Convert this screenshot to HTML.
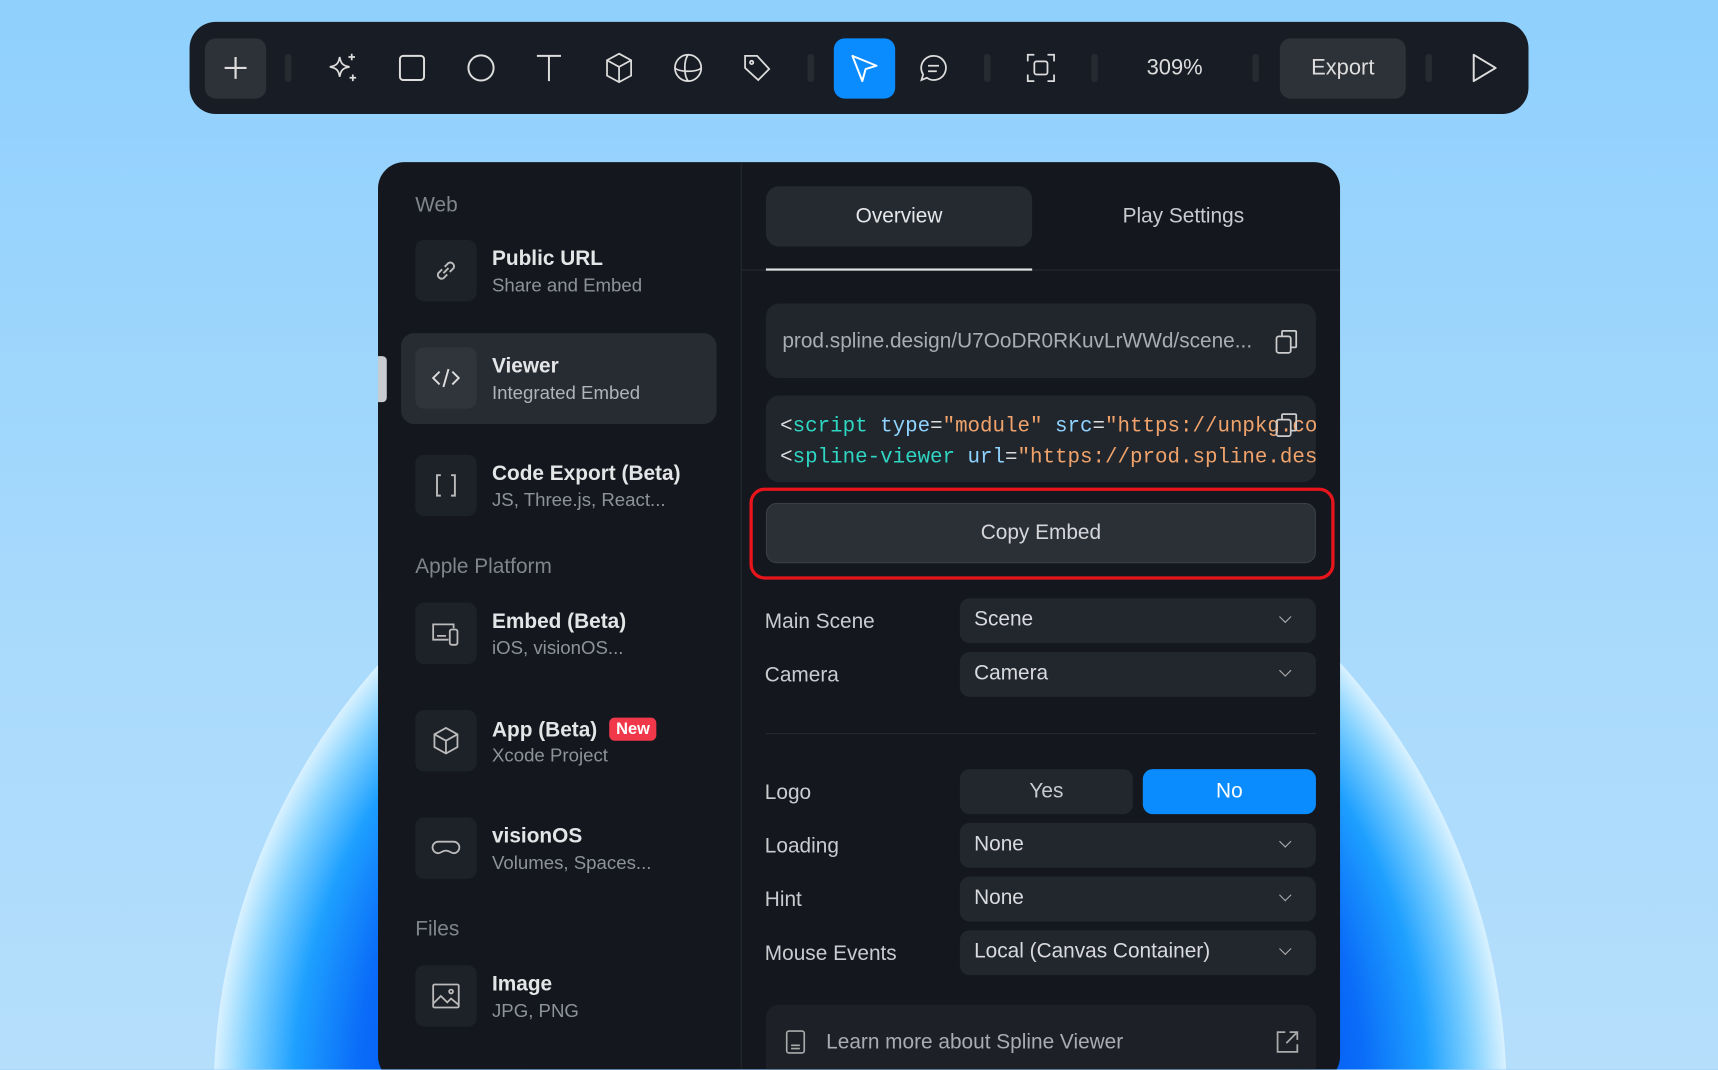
<!DOCTYPE html>
<html><head><meta charset="utf-8"><style>
*{box-sizing:border-box;margin:0;padding:0}
html,body{width:1718px;height:1070px;overflow:hidden}
body{background:#9fd4fb;font-family:"Liberation Sans",sans-serif}
#s{position:absolute;left:0;top:0;width:1568px;height:976px;transform:scale(1.0957);transform-origin:0 0;overflow:hidden;background:linear-gradient(#8fd0fd,#a9dafc 60%,#b5defb)}
.abs{position:absolute}
.globe{position:absolute;left:195px;top:410px;width:1180px;height:1180px;border-radius:50%;
background:radial-gradient(circle at 50% 50%,#0040e0 0%,#0050f0 45%,#0a6cf8 55%,#1ea0ff 62%,#7fd0ff 67%,#e0f4ff 71%,#c6e9fe 74%);}
.tb{left:173px;top:20px;width:1222px;height:84px;background:#181c24;border-radius:24px}
.sep{position:absolute;top:49px;width:6px;height:26px;border-radius:3px;background:#262a31}
.ic{position:absolute;top:46px;width:32px;height:32px}
.panel{left:345px;top:148px;width:878px;height:840px;background:#14181e;border-radius:24px;overflow:hidden}
.lbl{position:absolute;color:#80858c;font-size:19px}
.item{position:absolute;left:379px;height:56px}
.ib{position:absolute;left:0;top:0;width:56px;height:56px;background:#1d2128;border-radius:8px}
.ib svg{position:absolute;left:14px;top:14px;width:28px;height:28px}
.t1{position:absolute;left:70px;top:7px;color:#e4e5e7;font-size:19px;font-weight:bold;white-space:nowrap}
.t2{position:absolute;left:70px;top:32px;color:#8e9299;font-size:17px;white-space:nowrap}
.box{position:absolute;background:#21252c;border-radius:12px}
.rl{position:absolute;left:698px;color:#c9cbcf;font-size:19px}
.sel{position:absolute;left:876px;width:325px;height:41px;background:#22262d;border-radius:9px;color:#d9dadd;font-size:19px;padding:9px 13px}
.sel:after{content:"";position:absolute;right:24px;top:13px;width:7px;height:7px;border-right:1.6px solid #aaa;border-bottom:1.6px solid #aaa;transform:rotate(45deg)}
.mono{font-family:"Liberation Mono",monospace;font-size:19px;white-space:nowrap}
</style></head><body><div id="s">
<div class="globe"></div>

<div class="abs tb"></div>
<div class="abs" style="left:187px;top:35px;width:56px;height:55px;background:#2d3138;border-radius:10px"></div>
<svg class="abs" style="left:203px;top:50px" width="24" height="24" stroke="#ddd" stroke-width="2" fill="none"><path d="M12 2v20M2 12h20"/></svg>
<div class="sep" style="left:260px"></div><div class="sep" style="left:737px"></div><div class="sep" style="left:898px"></div><div class="sep" style="left:996px"></div><div class="sep" style="left:1143px"></div><div class="sep" style="left:1301px"></div>
<svg class="ic" style="left:297px" viewBox="0 0 32 32" fill="none" stroke="#ddd" stroke-width="1.6"><path d="M13 6c1 6 3 8 9 9-6 1-8 3-9 9-1-6-3-8-9-9 6-1 8-3 9-9z"/><path d="M24 3v6M21 6h6M25 22v6M22 25h6"/></svg>
<svg class="ic" style="left:360px" viewBox="0 0 32 32" fill="none" stroke="#ddd" stroke-width="1.8"><rect x="5" y="5" width="22" height="22" rx="3"/></svg>
<svg class="ic" style="left:423px" viewBox="0 0 32 32" fill="none" stroke="#ddd" stroke-width="1.8"><circle cx="16" cy="16" r="11.5"/></svg>
<svg class="ic" style="left:485px" viewBox="0 0 32 32" fill="none" stroke="#ddd" stroke-width="1.8"><path d="M5 5h22M16 5v23"/></svg>
<svg class="ic" style="left:549px" viewBox="0 0 32 32" fill="none" stroke="#ddd" stroke-width="1.6"><path d="M16 3l11 6v14l-11 6-11-6V9zM5 9l11 6 11-6M16 15v14"/></svg>
<svg class="ic" style="left:612px" viewBox="0 0 32 32" fill="none" stroke="#ddd" stroke-width="1.6"><circle cx="16" cy="16" r="12"/><path d="M4 16c4 4 20 4 24 0M16 4c-4 5-4 19 0 24"/></svg>
<svg class="ic" style="left:675px" viewBox="0 0 32 32" fill="none" stroke="#ddd" stroke-width="1.6"><path d="M5 5h11l11 12-10 10L5 16z"/><circle cx="11" cy="11" r="1.5"/></svg>
<div class="abs" style="left:761px;top:35px;width:56px;height:55px;background:#0a8cff;border-radius:10px"></div>
<svg class="ic" style="left:773px;top:47px" viewBox="0 0 32 32" fill="none" stroke="#fff" stroke-width="1.8" stroke-linejoin="round"><path d="M5 4l22 9-10 3-3 11z"/></svg>
<svg class="ic" style="left:836px" viewBox="0 0 32 32" fill="none" stroke="#ddd" stroke-width="1.6"><path d="M16 5a11 11 0 1 1-6 20l-5 2 1.5-5A11 11 0 0 1 16 5z"/><path d="M11 14h10M11 19h8"/></svg>
<svg class="ic" style="left:934px" viewBox="0 0 32 32" fill="none" stroke="#ddd" stroke-width="1.6"><path d="M4 10V4h6M22 4h6v6M28 22v6h-6M10 28H4v-6"/><rect x="10" y="10" width="12" height="12" rx="2"/></svg>
<div class="abs" style="left:1030px;top:51px;width:84px;text-align:center;color:#ddd;font-size:20px">309%</div>
<div class="abs" style="left:1168px;top:35px;width:115px;height:55px;background:#2d3138;border-radius:10px;color:#ddd;font-size:20px;text-align:center;line-height:55px">Export</div>
<svg class="ic" style="left:1338px" viewBox="0 0 32 32" fill="none" stroke="#ddd" stroke-width="1.8" stroke-linejoin="round"><path d="M7 4l20 12-20 12z"/></svg>

<div class="abs panel"></div>
<div class="abs" style="left:676px;top:148px;width:1px;height:829px;background:#252930"></div>
<div class="abs" style="left:345px;top:325px;width:8px;height:42px;background:#c9ccd0;border-radius:0 4px 4px 0"></div>
<div class="lbl" style="left:379px;top:177px">Web</div>
<div class="item" style="top:219px"><div class="ib"><svg viewBox="0 0 24 24" fill="none" stroke="#bbb" stroke-width="1.5"><path d="M10 14l4-4M9 11l-3 3a3 3 0 0 0 4 4l3-3M15 13l3-3a3 3 0 0 0-4-4l-3 3"/></svg></div><div class="t1">Public URL</div><div class="t2">Share and Embed</div></div>
<div class="abs" style="left:366px;top:304px;width:288px;height:83px;background:#272b32;border-radius:12px"></div>
<div class="item" style="top:317px"><div class="ib" style="background:#30343b"><svg viewBox="0 0 24 24" fill="none" stroke="#ddd" stroke-width="1.5"><path d="M7 7l-5 5 5 5M17 7l5 5-5 5M14 5l-4 14"/></svg></div><div class="t1">Viewer</div><div class="t2" style="color:#b0b3b8">Integrated Embed</div></div>
<div class="item" style="top:415px"><div class="ib"><svg viewBox="0 0 24 24" fill="none" stroke="#bbb" stroke-width="1.5"><path d="M8 4H5v16h3M16 4h3v16h-3"/></svg></div><div class="t1">Code Export (Beta)</div><div class="t2">JS, Three.js, React...</div></div>
<div class="lbl" style="left:379px;top:507px">Apple Platform</div>
<div class="item" style="top:550px"><div class="ib"><svg viewBox="0 0 24 24" fill="none" stroke="#bbb" stroke-width="1.4"><path d="M14 17H2V5h16v3M5 14h7"/><rect x="15" y="9" width="6" height="12" rx="1.5"/></svg></div><div class="t1">Embed (Beta)</div><div class="t2">iOS, visionOS...</div></div>
<div class="item" style="top:648px"><div class="ib"><svg viewBox="0 0 24 24" fill="none" stroke="#bbb" stroke-width="1.4"><path d="M12 2l9 5v10l-9 5-9-5V7zM3 7l9 5 9-5M12 12v10"/></svg></div><div class="t1">App (Beta) <span style="display:inline-block;background:#f0384a;color:#fff;font-size:15px;padding:2px 6px;border-radius:5px;margin-left:6px;vertical-align:2px">New</span></div><div class="t2">Xcode Project</div></div>
<div class="item" style="top:746px"><div class="ib"><svg viewBox="0 0 24 24" fill="none" stroke="#bbb" stroke-width="1.4"><path d="M6 7h12a4.5 4.5 0 0 1 0 9c-2 0-3-2-6-2s-4 2-6 2a4.5 4.5 0 0 1 0-9z"/></svg></div><div class="t1">visionOS</div><div class="t2">Volumes, Spaces...</div></div>
<div class="lbl" style="left:379px;top:838px">Files</div>
<div class="item" style="top:881px"><div class="ib"><svg viewBox="0 0 24 24" fill="none" stroke="#bbb" stroke-width="1.4"><rect x="2" y="3" width="20" height="18" rx="1"/><path d="M2 18l6-6 5 5 3-3 6 5"/><circle cx="16" cy="8.5" r="1.5"/></svg></div><div class="t1">Image</div><div class="t2">JPG, PNG</div></div>

<div class="box" style="left:699px;top:170px;width:243px;height:55px;background:#252930"></div>
<div class="abs" style="left:699px;top:187px;width:243px;text-align:center;color:#e6e7e9;font-size:19px">Overview</div>
<div class="abs" style="left:960px;top:187px;width:240px;text-align:center;color:#c9cbcf;font-size:19px">Play Settings</div>
<div class="abs" style="left:677px;top:246px;width:546px;height:1px;background:#262a31"></div>
<div class="abs" style="left:699px;top:245px;width:243px;height:2px;background:#e0e0e0"></div>
<div class="box" style="left:699px;top:277px;width:502px;height:68px"></div>
<div class="abs" style="left:714px;top:301px;color:#a9acb2;font-size:19px;white-space:nowrap">prod.spline.design/U7OoDR0RKuvLrWWd/scene...</div>
<svg class="abs" style="left:1162px;top:299px" width="24" height="26" fill="none" stroke="#ccc" stroke-width="1.6"><rect x="3" y="8" width="13" height="15" rx="2"/><path d="M8 8V4a1 1 0 0 1 1-1h11a1 1 0 0 1 1 1v13a1 1 0 0 1-1 1h-4"/></svg>
<div class="box" style="left:699px;top:361px;width:502px;height:79px;overflow:hidden">
<div class="abs mono" style="left:13px;top:17px;color:#ddd">&lt;<span style="color:#2fd6c3">script</span> <span style="color:#8fd3ff">type</span>=<span style="color:#f0a36b">"module"</span> <span style="color:#8fd3ff">src</span>=<span style="color:#f0a36b">"https://unpkg.com</span></div>
<div class="abs mono" style="left:13px;top:45px;color:#ddd">&lt;<span style="color:#2fd6c3">spline-viewer</span> <span style="color:#8fd3ff">url</span>=<span style="color:#f0a36b">"https://prod.spline.design</span></div>
</div>
<svg class="abs" style="left:1162px;top:375px" width="24" height="26" fill="none" stroke="#ccc" stroke-width="1.6"><rect x="3" y="8" width="13" height="15" rx="2"/><path d="M8 8V4a1 1 0 0 1 1-1h11a1 1 0 0 1 1 1v13a1 1 0 0 1-1 1h-4"/></svg>
<div class="abs" style="left:684px;top:445px;width:534px;height:84px;border:3px solid #e8141c;border-radius:14px"></div>
<div class="abs" style="left:699px;top:459px;width:502px;height:55px;background:#2b2f36;border:1px solid #3a3e45;border-radius:10px;color:#d5d7da;font-size:19px;text-align:center;line-height:53px">Copy Embed</div>
<div class="rl" style="top:557px">Main Scene</div><div class="sel" style="top:546px">Scene</div>
<div class="rl" style="top:606px">Camera</div><div class="sel" style="top:595px">Camera</div>
<div class="abs" style="left:699px;top:669px;width:502px;height:1px;background:#262a31"></div>
<div class="rl" style="top:713px">Logo</div>
<div class="abs" style="left:876px;top:702px;width:158px;height:41px;background:#22262d;border-radius:9px;color:#c9cbcf;font-size:19px;text-align:center;line-height:41px">Yes</div>
<div class="abs" style="left:1043px;top:702px;width:158px;height:41px;background:#0a8cff;border-radius:9px;color:#fff;font-size:19px;text-align:center;line-height:41px">No</div>
<div class="rl" style="top:762px">Loading</div><div class="sel" style="top:751px">None</div>
<div class="rl" style="top:811px">Hint</div><div class="sel" style="top:800px">None</div>
<div class="rl" style="top:860px">Mouse Events</div><div class="sel" style="top:849px">Local (Canvas Container)</div>
<div class="box" style="left:699px;top:917px;width:502px;height:59px;background:#1d2127;border-radius:12px 12px 0 0"></div>
<svg class="abs" style="left:714px;top:939px" width="24" height="24" fill="none" stroke="#aaa" stroke-width="1.5"><rect x="4" y="2" width="16" height="20" rx="2"/><path d="M8 15h8M8 18h8"/></svg>
<div class="abs" style="left:754px;top:941px;color:#a9acb2;font-size:19px">Learn more about Spline Viewer</div>
<svg class="abs" style="left:1163px;top:939px" width="24" height="24" fill="none" stroke="#aaa" stroke-width="1.6"><path d="M10 3H3v18h18v-7M14 3h7v7M21 3L11 13"/></svg>
</div></body></html>
